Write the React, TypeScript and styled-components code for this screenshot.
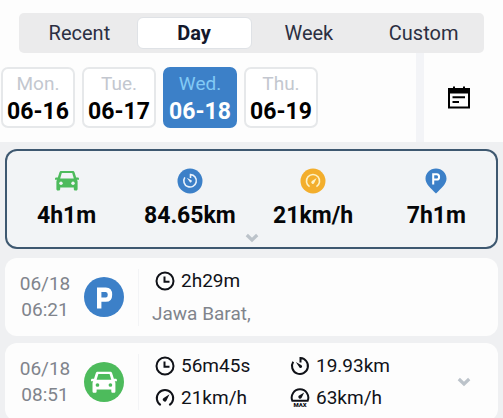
import React, { useState } from 'react';
import styled, { createGlobalStyle } from 'styled-components';

const GlobalStyle = createGlobalStyle`
  * {
    box-sizing: border-box;
  }
  body {
    margin: 0;
    background: #eff0f2;
    font-family: Roboto, "Liberation Sans", sans-serif;
    color: #101218;
  }
  button {
    font: inherit;
    color: inherit;
    border: 0;
    padding: 0;
    background: none;
    cursor: pointer;
  }
`;

const Page = styled.div`
  display: flex;
  flex-direction: column;
  height: 100vh;
  overflow: hidden;
`;

const Header = styled.header`
  flex: none;
  padding: 13px 19px 0;
  background: #fdfdfd;
`;

const TabBar = styled.nav`
  display: grid;
  grid-template-columns: repeat(4, 1fr);
  height: 40px;
  padding: 4px 3px;
  border-radius: 5px;
  background: #ebebec;
`;

const Tab = styled.button<{ $active: boolean }>`
  border: 1px solid ${(p) => (p.$active ? '#dfe2e6' : 'transparent')};
  border-radius: 6px;
  background: ${(p) => (p.$active ? '#fff' : 'transparent')};
  color: ${(p) => (p.$active ? '#14182c' : '#2b2f42')};
  font-size: 20px;
  font-weight: ${(p) => (p.$active ? 700 : 400)};
  line-height: 24px;
`;

const DateBar = styled.section`
  display: flex;
  flex: none;
  gap: 8px;
  height: 89px;
  background: #f3f4f7;
`;

const DateStrip = styled.div`
  display: flex;
  flex: 1;
  gap: 7px;
  padding: 14px 1px;
  background: #fdfdfd;
  overflow: hidden;
`;

const DateCard = styled.button<{ $active: boolean }>`
  display: flex;
  flex: 0 0 74px;
  flex-direction: column;
  align-items: center;
  height: 61px;
  padding-top: 3px;
  border: 2px solid ${(p) => (p.$active ? '#3c80c8' : '#e6e8ea')};
  border-radius: 7px;
  background: ${(p) => (p.$active ? '#3c80c8' : '#fff')};
  color: ${(p) => (p.$active ? '#fff' : '#000')};
`;

const Weekday = styled.span<{ $active: boolean }>`
  color: ${(p) => (p.$active ? '#82caf5' : '#c3c7cf')};
  font-size: 19px;
  line-height: 24px;
`;

const DayLabel = styled.span`
  font-size: 23px;
  font-weight: 700;
  line-height: 32px;
`;

const CalendarButton = styled.button`
  display: grid;
  flex: 0 0 79px;
  place-items: center;
  padding-right: 9px;
  background: #fdfdfd;
  color: #000;
`;

const Content = styled.main`
  display: flex;
  flex-direction: column;
  padding: 7px 5px;
`;

const Summary = styled.section`
  display: flex;
  flex-direction: column;
  align-items: center;
  height: 100px;
  padding-top: 19px;
  border-radius: 12px;
  background: #f2f4f6;
  box-shadow: inset 0 0 0 2px #3e5870;
`;

const SummaryGrid = styled.div`
  display: grid;
  grid-template-columns: repeat(4, 1fr);
  width: 100%;
`;

const Metric = styled.div`
  display: flex;
  flex-direction: column;
  align-items: center;
  gap: 8px;
  color: #050608;
  font-size: 23px;
  font-weight: 700;
  line-height: 28px;
`;

const ExpandButton = styled.button`
  display: grid;
  place-items: center;
  width: 24px;
  height: 16px;
  color: #bcc3ca;
`;

const TripList = styled.ul`
  display: flex;
  flex-direction: column;
  gap: 7px;
  margin: 9px 0 0;
  padding: 0;
  list-style: none;
`;

const TripCard = styled.li`
  display: flex;
  align-items: center;
  height: 78px;
  padding: 0 22px 0 14px;
  border-radius: 12px;
  background: #fdfdfd;
`;

const Timestamp = styled.time`
  display: flex;
  flex: 0 0 52px;
  flex-direction: column;
  align-items: center;
  color: #80848c;
  font-size: 19px;
  line-height: 26px;
`;

const TripBadge = styled.div`
  display: flex;
  margin-left: 13px;
`;

const TripDetails = styled.div`
  flex: 1;
  margin-left: 14px;
  padding-left: 13px;
  border-left: 1px solid #f3f4f6;
`;

const StatGrid = styled.div`
  display: grid;
  grid-template-columns: 135px auto;
  justify-content: start;
  row-gap: 8px;
  padding-left: 3px;
`;

const Stat = styled.div`
  display: flex;
  align-items: center;
  gap: 6px;
  font-size: 19px;
  line-height: 24px;
`;

const Address = styled.p`
  margin: 9px 0 0;
  color: #80848c;
  font-size: 19px;
  line-height: 24px;
`;

const CAR_BODY =
  'M6.2 3h11.6c.8 0 1.4.5 1.7 1.2L21.2 9.600H22.500c.9 0 1.500.5 1.500 1.200v.9h-2c.4.6.6 1.200.6 2V21c0 .9-.5 1.500-1.300 1.500h-1.200c-.8 0-1.300-.6-1.300-1.500v-1.500H5.200V21c0 .9-.5 1.500-1.300 1.500H2.700c-.8 0-1.300-.6-1.300-1.500v-7.300c0-.8.2-1.400.6-2H0v-.9c0-.7.6-1.200 1.500-1.200h1.300L4.500 4.200C4.800 3.500 5.400 3 6.200 3Z';

function CarShape({ fill, hole }: { fill: string; hole: string }) {
  return (
    <g>
      <path d={CAR_BODY} fill={fill} />
      <path d="M6.800 5h10.400l1.600 5.500H5.200Z" fill={hole} />
      <circle cx="6" cy="15.300" r="1.700" fill={hole} />
      <circle cx="18" cy="15.300" r="1.700" fill={hole} />
    </g>
  );
}

function CarIcon() {
  return (
    <svg width="26" height="26" viewBox="-1 0 26 26" aria-hidden="true">
      <CarShape fill="#4dbb5c" hole="#f2f4f6" />
    </svg>
  );
}

function DistanceShape({ color }: { color: string }) {
  return (
    <g fill="none" stroke={color} strokeWidth="2">
      <path d="M3.200 5.700A8 8 0 1 0 10.500 2v4.500" />
      <path d="m5.800 6 5.300 3.100a1.500 1.500 0 1 1-1.900 1.900Z" fill={color} stroke="none" />
    </g>
  );
}

function GaugeShape({ color }: { color: string }) {
  return (
    <g>
      <path
        d="M5.700 17.100A8.200 8.200 0 1 1 14.300 17.100"
        fill="none"
        stroke={color}
        strokeWidth="2"
      />
      <path d="m14.500 6.200-3 6.200a1.900 1.900 0 1 1-2.800-2.400Z" fill={color} />
    </g>
  );
}

function DistanceBadge() {
  return (
    <svg width="26" height="26" viewBox="0 0 26 26" aria-hidden="true">
      <circle cx="13" cy="13" r="12.500" fill="#3c80c8" />
      <g transform="translate(5.300 5) scale(.78)">
        <DistanceShape color="#eaf3fc" />
      </g>
    </svg>
  );
}

function SpeedBadge() {
  return (
    <svg width="26" height="26" viewBox="0 0 26 26" aria-hidden="true">
      <circle cx="13" cy="13" r="12.500" fill="#f3ae2c" />
      <g transform="translate(5 5) scale(.8)">
        <GaugeShape color="#fdf3c8" />
      </g>
    </svg>
  );
}

function ParkingGlyph({ color, width }: { color: string; width: number }) {
  return (
    <path
      d="M2 19V2h6q3.800 0 3.800 4.500T8 11H2"
      fill="none"
      stroke={color}
      strokeWidth={width}
    />
  );
}

function ParkingPin() {
  return (
    <svg width="26" height="26" viewBox="0 0 26 26" aria-hidden="true">
      <path
        d="M13 .5C7 .5 2.500 5 2.500 10.700c0 5.300 5.500 9.800 10.500 14.800 5-5 10.500-9.500 10.500-14.800C23.500 5 19 .5 13 .5Z"
        fill="#3c80c8"
      />
      <g transform="translate(9 5) scale(.6)">
        <ParkingGlyph color="#fff" width={3.4} />
      </g>
    </svg>
  );
}

function ParkingCircle() {
  return (
    <svg width="40" height="40" viewBox="0 0 40 40" aria-hidden="true">
      <circle cx="20" cy="20" r="20" fill="#3c80c8" />
      <g transform="translate(13 10.500) scale(1.100)">
        <ParkingGlyph color="#fff" width={4} />
      </g>
    </svg>
  );
}

function CarCircle() {
  return (
    <svg width="40" height="40" viewBox="0 0 40 40" aria-hidden="true">
      <circle cx="20" cy="20" r="20" fill="#4dbb5c" />
      <g transform="translate(7 6.500) scale(1.080)">
        <CarShape fill="#fff" hole="#4dbb5c" />
      </g>
    </svg>
  );
}

function ClockIcon() {
  return (
    <svg width="20" height="20" viewBox="0 0 20 20" aria-hidden="true">
      <circle cx="10" cy="10" r="8.500" fill="none" stroke="#101218" strokeWidth="2" />
      <path d="M9.500 5.500v5.300h5" fill="none" stroke="#101218" strokeWidth="2" />
    </svg>
  );
}

function DistanceIcon() {
  return (
    <svg width="20" height="20" viewBox="0 0 20 20" aria-hidden="true">
      <DistanceShape color="#101218" />
    </svg>
  );
}

function SpeedIcon() {
  return (
    <svg width="20" height="20" viewBox="0 0 20 20" aria-hidden="true">
      <GaugeShape color="#101218" />
    </svg>
  );
}

function MaxSpeedIcon() {
  return (
    <svg width="20" height="20" viewBox="0 0 20 20" aria-hidden="true">
      <path
        d="M2.300 12.700A8.300 8.300 0 1 1 17.700 12.700Z"
        fill="none"
        stroke="#101218"
        strokeWidth="2"
      />
      <path d="m14.200 4.500-2.700 5.600a1.800 1.800 0 1 1-2.800-2.300Z" fill="#101218" />
      <text
        x="10"
        y="18.500"
        fill="#101218"
        fontFamily="Roboto, sans-serif"
        fontSize="6"
        fontWeight="900"
        textAnchor="middle"
      >
        MAX
      </text>
    </svg>
  );
}

function CalendarIcon() {
  return (
    <svg width="24" height="24" viewBox="0 0 24 24" aria-hidden="true">
      <path
        d="M1 2h5V.5h2V2h8V.5h2V2h5v20.500H1Zm2 5.500v13h18v-13Z"
        fill="currentColor"
        fillRule="evenodd"
      />
      <path d="M5.500 11.300h12.500M5.500 16h6.500" stroke="currentColor" strokeWidth="2" />
    </svg>
  );
}

function ChevronIcon() {
  return (
    <svg width="14" height="10" viewBox="0 0 14 10" aria-hidden="true">
      <path d="m1.800 2 5.200 5 5.200-5" fill="none" stroke="currentColor" strokeWidth="3.200" />
    </svg>
  );
}

const tabs = ['Recent', 'Day', 'Week', 'Custom'];

const days = [
  { weekday: 'Mon.', date: '06-16' },
  { weekday: 'Tue.', date: '06-17' },
  { weekday: 'Wed.', date: '06-18' },
  { weekday: 'Thu.', date: '06-19' },
];

const metrics = [
  { icon: <CarIcon />, value: '4h1m' },
  { icon: <DistanceBadge />, value: '84.65km' },
  { icon: <SpeedBadge />, value: '21km/h' },
  { icon: <ParkingPin />, value: '7h1m' },
];

const trips = [
  {
    date: '06/18',
    time: '06:21',
    badge: <ParkingCircle />,
    stats: [{ icon: <ClockIcon />, value: '2h29m' }],
    address: 'Jawa Barat,',
  },
  {
    date: '06/18',
    time: '08:51',
    badge: <CarCircle />,
    stats: [
      { icon: <ClockIcon />, value: '56m45s' },
      { icon: <DistanceIcon />, value: '19.93km' },
      { icon: <SpeedIcon />, value: '21km/h' },
      { icon: <MaxSpeedIcon />, value: '63km/h' },
    ],
  },
];

export default function App() {
  const [tab, setTab] = useState('Day');
  const [day, setDay] = useState('06-18');

  return (
    <Page>
      <GlobalStyle />
      <Header>
        <TabBar>
          {tabs.map((name) => (
            <Tab
              key={name}
              type="button"
              $active={name === tab}
              aria-pressed={name === tab}
              onClick={() => setTab(name)}
            >
              {name}
            </Tab>
          ))}
        </TabBar>
      </Header>
      <DateBar>
        <DateStrip>
          {days.map(({ weekday, date }) => (
            <DateCard
              key={date}
              type="button"
              $active={date === day}
              aria-pressed={date === day}
              onClick={() => setDay(date)}
            >
              <Weekday $active={date === day}>{weekday}</Weekday>
              <DayLabel>{date}</DayLabel>
            </DateCard>
          ))}
        </DateStrip>
        <CalendarButton type="button" aria-label="Choose date">
          <CalendarIcon />
        </CalendarButton>
      </DateBar>
      <Content>
        <Summary>
          <SummaryGrid>
            {metrics.map(({ icon, value }) => (
              <Metric key={value}>
                {icon}
                <span>{value}</span>
              </Metric>
            ))}
          </SummaryGrid>
          <ExpandButton type="button" aria-label="Expand summary">
            <ChevronIcon />
          </ExpandButton>
        </Summary>
        <TripList>
          {trips.map((trip) => (
            <TripCard key={trip.time}>
              <Timestamp>
                <span>{trip.date}</span>
                <span>{trip.time}</span>
              </Timestamp>
              <TripBadge>{trip.badge}</TripBadge>
              <TripDetails>
                <StatGrid>
                  {trip.stats.map(({ icon, value }) => (
                    <Stat key={value}>
                      {icon}
                      <span>{value}</span>
                    </Stat>
                  ))}
                </StatGrid>
                {trip.address && <Address>{trip.address}</Address>}
              </TripDetails>
              {!trip.address && (
                <ExpandButton type="button" aria-label="Expand trip">
                  <ChevronIcon />
                </ExpandButton>
              )}
            </TripCard>
          ))}
        </TripList>
      </Content>
    </Page>
  );
}
